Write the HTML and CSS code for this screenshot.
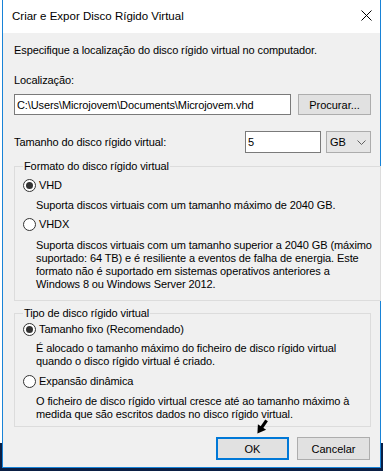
FILE: index.html
```html
<!DOCTYPE html>
<html lang="pt">
  <head>
    <meta charset="UTF-8" />
    <meta name="viewport" content="width=device-width, initial-scale=1.0" />
    <title>Criar e Expor Disco Rígido Virtual</title>
    <link rel="stylesheet" href="styles.css">
  </head>
  <body>
    <div class="window">
      <div class="titlebar">
        <span class="title">Criar e Expor Disco Rígido Virtual</span>
        <svg class="close" width="11" height="11" viewBox="0 0 11 11">
          <path d="M0.5 0.5 L10.5 10.5 M10.5 0.5 L0.5 10.5" stroke="#000" stroke-width="1" fill="none" />
        </svg>
      </div>

      <div class="content">
        <p class="intro">Especifique a localização do disco rígido virtual no computador.</p>

        <label class="field-label" for="path">Localização:</label>
        <div class="path-row">
          <input class="textbox path" id="path" type="text" value="C:\Users\Microjovem\Documents\Microjovem.vhd" />
          <button class="btn browse">Procurar...</button>
        </div>

        <div class="size-row">
          <label for="size">Tamanho do disco rígido virtual:</label>
          <input class="textbox size" id="size" type="text" value="5" />
          <div class="combo">
            <span>GB</span>
            <svg width="9" height="5" viewBox="0 0 9 5">
              <path d="M0.5 0.5 L4.5 4.5 L8.5 0.5" stroke="#606060" stroke-width="1" fill="none" />
            </svg>
          </div>
        </div>

        <fieldset class="group format">
          <legend>Formato do disco rígido virtual</legend>
          <div class="option first"><span class="radio checked"></span>VHD</div>
          <p class="desc">Suporta discos virtuais com um tamanho máximo de 2040 GB.</p>
          <div class="option"><span class="radio"></span>VHDX</div>
          <p class="desc">Suporta discos virtuais com um tamanho superior a 2040 GB (máximo<br>suportado: 64 TB) e é resiliente a eventos de falha de energia. Este<br>formato não é suportado em sistemas operativos anteriores a<br>Windows 8 ou Windows Server 2012.</p>
        </fieldset>

        <fieldset class="group type">
          <legend>Tipo de disco rígido virtual</legend>
          <div class="option first"><span class="radio checked"></span>Tamanho fixo (Recomendado)</div>
          <p class="desc">É alocado o tamanho máximo do ficheiro de disco rígido virtual<br>quando o disco rígido virtual é criado.</p>
          <div class="option"><span class="radio"></span>Expansão dinâmica</div>
          <p class="desc">O ficheiro de disco rígido virtual cresce até ao tamanho máximo à<br>medida que são escritos dados no disco rígido virtual.</p>
        </fieldset>

        <div class="actions">
          <button class="btn default">OK</button>
          <button class="btn">Cancelar</button>
          <!-- mouse pointer over the OK button -->
          <svg class="pointer" width="18" height="20" viewBox="-9 -10 18 20">
            <g transform="rotate(35)">
              <rect x="-1.6" y="-8" width="3.2" height="9" fill="#000" />
              <polygon points="-5,0 5,0 0,8" fill="#000" />
            </g>
          </svg>
        </div>
      </div>
    </div>
  </body>
</html>
```

FILE: styles.css
```css
body {
  margin: 0;
  padding-left: 2px;
  height: 471px;
  box-sizing: border-box;
  background: linear-gradient(to bottom, #ffffff 0, #ffffff 443px, #0b1f44 443px);
  font-family: "Liberation Sans", Arial, sans-serif;
  font-size: 11px;
  letter-spacing: -0.1px;
  color: #000;
  overflow: hidden;
}
.window {
  width: 379px;
  box-sizing: border-box;
  border: 1px solid #1883d7;
  border-top: none;
  background: #f0f0f0;
}
.titlebar {
  height: 31px;
  background: #fff;
  display: flex;
  align-items: center;
  padding: 0 8px 2px 9px;
}
.title {
  flex: 1;
  font-size: 11.5px;
  letter-spacing: 0;
}
.content {
  padding: 11px 9px 7px 11px;
}
.intro {
  margin: 0;
  line-height: 13px;
}
.field-label {
  display: block;
  margin-top: 17px;
  line-height: 13px;
}
.path-row {
  display: flex;
  margin-top: 7px;
}
.textbox {
  font-family: inherit;
  font-size: 11px;
  letter-spacing: -0.1px;
  color: #000;
  border: 1px solid #7a7a7a;
  background: #fff;
  padding: 0 2px;
  box-sizing: border-box;
  outline: none;
}
.path {
  width: 277px;
  height: 21px;
}
.btn {
  font-family: inherit;
  font-size: 11px;
  color: #000;
  background: #e1e1e1;
  border: 1px solid #adadad;
  width: 73px;
  height: 21px;
  padding: 0;
}
.browse {
  margin-left: auto;
}
.size-row {
  display: flex;
  align-items: center;
  margin-top: 16px;
}
.size {
  width: 76px;
  height: 22px;
  margin-left: auto;
}
.combo {
  width: 45px;
  height: 22px;
  margin-left: 5px;
  box-sizing: border-box;
  border: 1px solid #acacac;
  background: #e5e5e5;
  display: flex;
  align-items: center;
  justify-content: space-between;
  padding: 0 4px 0 3px;
}
.group {
  margin: 7px 0 0;
  padding: 0 8px 9px 8px;
  border: 1px solid #dcdcdc;
}
.group legend {
  margin-left: 0;
  padding: 0 1px;
  line-height: 13px;
}
.type {
  margin-top: 6px;
  padding-bottom: 5px;
}
.option {
  display: flex;
  align-items: center;
  line-height: 13px;
  margin-top: 6px;
}
.type .option {
  margin-top: 7px;
}
.format .option.first {
  margin-top: 6px;
}
.type .option.first {
  margin-top: 3px;
}
.radio {
  width: 13px;
  height: 13px;
  box-sizing: border-box;
  border: 1px solid #333;
  border-radius: 50%;
  background: #fff;
  margin-right: 3px;
  display: flex;
  align-items: center;
  justify-content: center;
}
.radio.checked::after {
  content: "";
  width: 7px;
  height: 7px;
  border-radius: 50%;
  background: #333;
}
.desc {
  margin: 7px 0 0 13px;
  line-height: 13px;
  white-space: nowrap;
}
.format .desc + .option + .desc {
  margin-top: 8px;
}
.type .desc {
  margin-top: 6px;
}
.type .desc + .option + .desc {
  margin-top: 7px;
}
.actions {
  position: relative;
  display: flex;
  justify-content: flex-end;
  gap: 8px;
  margin-top: 10px;
  padding-right: 1px;
}
.actions .btn {
  height: 23px;
}
.btn.default {
  border: 2px solid #0078d7;
}
.pointer {
  position: absolute;
  left: 239px;
  top: -20px;
}
```
